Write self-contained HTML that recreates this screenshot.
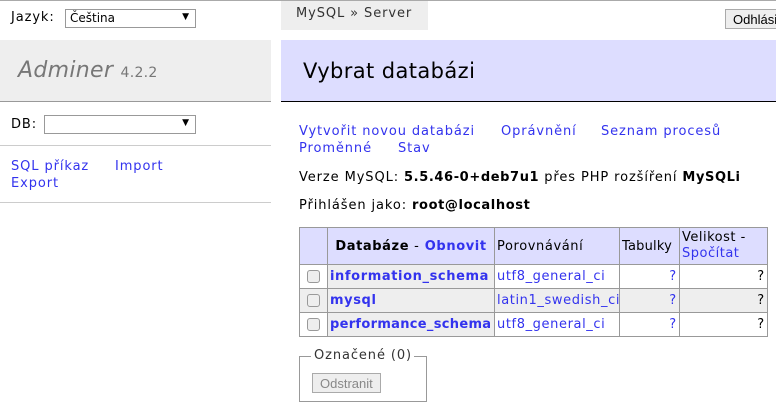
<!DOCTYPE html>
<html><head><meta charset="utf-8"><style>
*{margin:0;padding:0;box-sizing:border-box}
body{width:776px;height:413px;overflow:hidden;background:#fff;font-family:"DejaVu Sans",Verdana,sans-serif;font-size:13px;letter-spacing:0.9px;color:#000;position:relative;border-top:1px solid #aaa}
b{letter-spacing:0.6px}
.a{position:absolute;white-space:nowrap}
a{color:#3333ee;text-decoration:none}
.sel{position:absolute;border:1px solid #999;background:#fff;height:19px;font-size:12px;padding:1px 4px;letter-spacing:0}
.sel:after{content:"▼";position:absolute;right:6px;top:2px;font-size:9px}
table{position:absolute;left:299px;top:226px;border-collapse:collapse;font-size:13px;table-layout:fixed;width:468px}
td,th{border:1px solid #999;padding:0 2px;height:24px;text-align:left;font-weight:normal;white-space:nowrap;overflow:hidden}
th{background:#ddf;height:37px}
.c{letter-spacing:0.6px}
.g{background:#eee}
.cb{display:inline-block;width:13px;height:13px;border:1px solid #999;border-radius:3px;background:#eee;vertical-align:middle;margin-left:5px}
</style></head><body>
<div class="a" style="left:11px;top:9px">Jazyk:</div>
<div class="sel" style="left:65px;top:8px;width:131px">Čeština</div>
<div class="a" style="left:0;top:39px;width:271px;height:62px;background:#eee;border-bottom:1px solid #999"></div>
<div class="a" style="left:18px;top:57px;font-size:22px;font-style:italic;color:#777;letter-spacing:0.3px">Adminer <span style="font-size:14px;font-style:normal">4.2.2</span></div>
<div class="a" style="left:11px;top:116px">DB:</div>
<div class="sel" style="left:44px;top:114px;width:152px"></div>
<div class="a" style="left:0;top:144px;width:271px;border-top:1px solid #ccc"></div>
<div class="a" style="left:11px;top:158px"><a href="#">SQL příkaz</a></div>
<div class="a" style="left:115px;top:158px"><a href="#">Import</a></div>
<div class="a" style="left:11px;top:175px"><a href="#">Export</a></div>
<div class="a" style="left:0;top:201px;width:271px;border-top:1px solid #ccc"></div>

<div class="a" style="left:281px;top:0;width:147px;height:29px;background:#eee"></div>
<div class="a" style="left:296px;top:5px;color:#333">MySQL » Server</div>
<div class="a" style="left:725px;top:8px;width:60px;height:20px;border:1px solid #aaa;background:#eee;font-family:'Liberation Sans',sans-serif;font-size:13px;letter-spacing:0;padding:2px 0 0 7px">Odhlásit</div>
<div class="a" style="left:281px;top:39px;width:495px;height:62px;background:#ddf;border-bottom:1px solid #000"></div>
<div class="a" style="left:303px;top:58px;font-size:21px;letter-spacing:0.4px">Vybrat databázi</div>
<div class="a" style="left:299px;top:123px"><a href="#">Vytvořit novou databázi</a></div>
<div class="a" style="left:501px;top:123px"><a href="#">Oprávnění</a></div>
<div class="a" style="left:601px;top:123px"><a href="#">Seznam procesů</a></div>
<div class="a" style="left:299px;top:140px"><a href="#">Proměnné</a></div>
<div class="a" style="left:398px;top:140px"><a href="#">Stav</a></div>
<div class="a" style="left:299px;top:169px">Verze MySQL: <b>5.5.46-0+deb7u1</b> přes PHP rozšíření <b>MySQLi</b></div>
<div class="a" style="left:299px;top:197px">Přihlášen jako: <b>root@localhost</b></div>
<table>
<colgroup><col style="width:28px"><col style="width:167px"><col style="width:125px"><col style="width:60px"><col style="width:88px"></colgroup>
<tr><th></th><th style="text-align:center"><b>Databáze</b> - <a href="#"><b>Obnovit</b></a></th><th class="c">Porovnávání</th><th style="letter-spacing:0.2px">Tabulky</th><th style="line-height:16px;letter-spacing:0.5px">Velikost -<br><a href="#">Spočítat</a></th></tr>
<tr><td><span class="cb"></span></td><td class="g"><a href="#"><b>information_schema</b></a></td><td class="c"><a href="#">utf8_general_ci</a></td><td style="text-align:right"><a href="#">?</a></td><td style="text-align:right">?</td></tr>
<tr class="g"><td><span class="cb"></span></td><td><a href="#"><b>mysql</b></a></td><td class="c"><a href="#">latin1_swedish_ci</a></td><td style="text-align:right"><a href="#">?</a></td><td style="text-align:right">?</td></tr>
<tr><td><span class="cb"></span></td><td class="g"><a href="#"><b style="letter-spacing:0.3px">performance_schema</b></a></td><td class="c"><a href="#">utf8_general_ci</a></td><td style="text-align:right"><a href="#">?</a></td><td style="text-align:right">?</td></tr>
</table>
<div class="a" style="left:299px;top:355px;width:128px;height:46px;border:1px solid #999;border-top:none"></div>
<div class="a" style="left:299px;top:355px;width:12px;border-top:1px solid #999"></div>
<div class="a" style="left:414px;top:355px;width:13px;border-top:1px solid #999"></div>
<div class="a" style="left:314px;top:347px;color:#333">Označené (0)</div>
<div class="a" style="left:312px;top:372px;width:69px;height:20px;border:1px solid #aaa;background:#eee;color:#888;font-family:'Liberation Sans',sans-serif;font-size:13px;letter-spacing:0;padding:2px 0 0 7px">Odstranit</div>
</body></html>
